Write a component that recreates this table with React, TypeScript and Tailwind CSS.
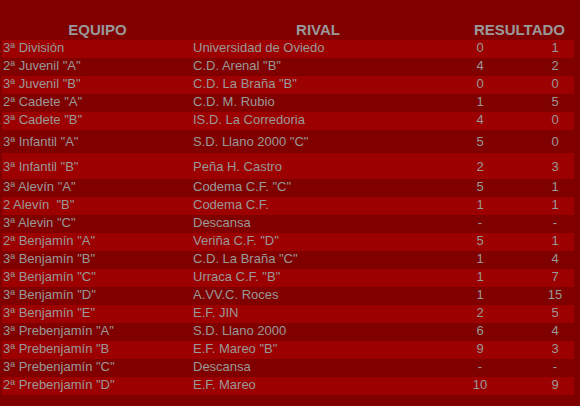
type Match = {
  team: string;
  rival: string;
  home: string;
  away: string;
  tall?: "a" | "b";
};

const matches: Match[] = [
  { team: "3ª División", rival: "Universidad de Oviedo", home: "0", away: "1" },
  { team: '2ª Juvenil "A"', rival: 'C.D. Arenal "B"', home: "4", away: "2" },
  { team: '3ª Juvenil "B"', rival: 'C.D. La Braña "B"', home: "0", away: "0" },
  { team: '2ª Cadete "A"', rival: "C.D. M. Rubio", home: "1", away: "5" },
  { team: '3ª Cadete "B"', rival: "IS.D. La Corredoria", home: "4", away: "0" },
  { team: '3ª Infantil "A"', rival: 'S.D. Llano 2000 "C"', home: "5", away: "0", tall: "a" },
  { team: '3ª Infantil "B"', rival: "Peña H. Castro", home: "2", away: "3", tall: "b" },
  { team: '3ª Alevín "A"', rival: 'Codema C.F. "C"', home: "5", away: "1" },
  { team: '2 Alevín  "B"', rival: "Codema C.F.", home: "1", away: "1" },
  { team: '3ª Alevin "C"', rival: "Descansa", home: "-", away: "-" },
  { team: '2ª Benjamín "A"', rival: 'Veriña C.F. "D"', home: "5", away: "1" },
  { team: '3ª Benjamín "B"', rival: 'C.D. La Braña "C"', home: "1", away: "4" },
  { team: '3ª Benjamín "C"', rival: 'Urraca C.F. "B"', home: "1", away: "7" },
  { team: '3ª Benjamín "D"', rival: "A.VV.C. Roces", home: "1", away: "15" },
  { team: '3ª Benjamín "E"', rival: "E.F. JIN", home: "2", away: "5" },
  { team: '3ª Prebenjamín "A"', rival: "S.D. Llano 2000", home: "6", away: "4" },
  { team: '3ª Prebenjamín "B', rival: 'E.F. Mareo "B"', home: "9", away: "3" },
  { team: '3ª Prebenjamín "C"', rival: "Descansa", home: "-", away: "-" },
  { team: '2ª Prebenjamín "D"', rival: "E.F. Mareo", home: "10", away: "9" },
];

const rowHeight = (m: Match) => {
  if (m.tall === "a") return "h-[23px]";
  if (m.tall === "b") return "h-[26px]";
  return "h-[18px] pb-[3px]";
};

const App = () => {
  return (
    <div className="min-h-[406px] bg-[#800000] pl-[2px] font-['Liberation_Sans',Arial,sans-serif] text-[#999999]">
      <div className="w-[572px]">
        {/* header */}
        <div className="grid h-[40px] grid-cols-[191px_250px_131px] items-end pb-[2px] text-[15px] font-bold leading-[17px]">
          <div className="text-center">EQUIPO</div>
          <div className="text-center">RIVAL</div>
          <div className="pr-[9px] text-right">RESULTADO</div>
        </div>

        {matches.map((m, idx) => (
          <div
            key={idx}
            className={`grid grid-cols-[191px_231px_112px_38px] items-center text-[13px] leading-[15px] ${rowHeight(m)} ${
              idx % 2 === 0 ? "bg-[#9c0000]" : "bg-[#800000]"
            }`}
          >
            <div className="whitespace-pre pl-[1px]">{m.team}</div>
            <div className="whitespace-nowrap">{m.rival}</div>
            <div className="text-center">{m.home}</div>
            <div className="text-center">{m.away}</div>
          </div>
        ))}
      </div>
    </div>
  );
};

export default App;
